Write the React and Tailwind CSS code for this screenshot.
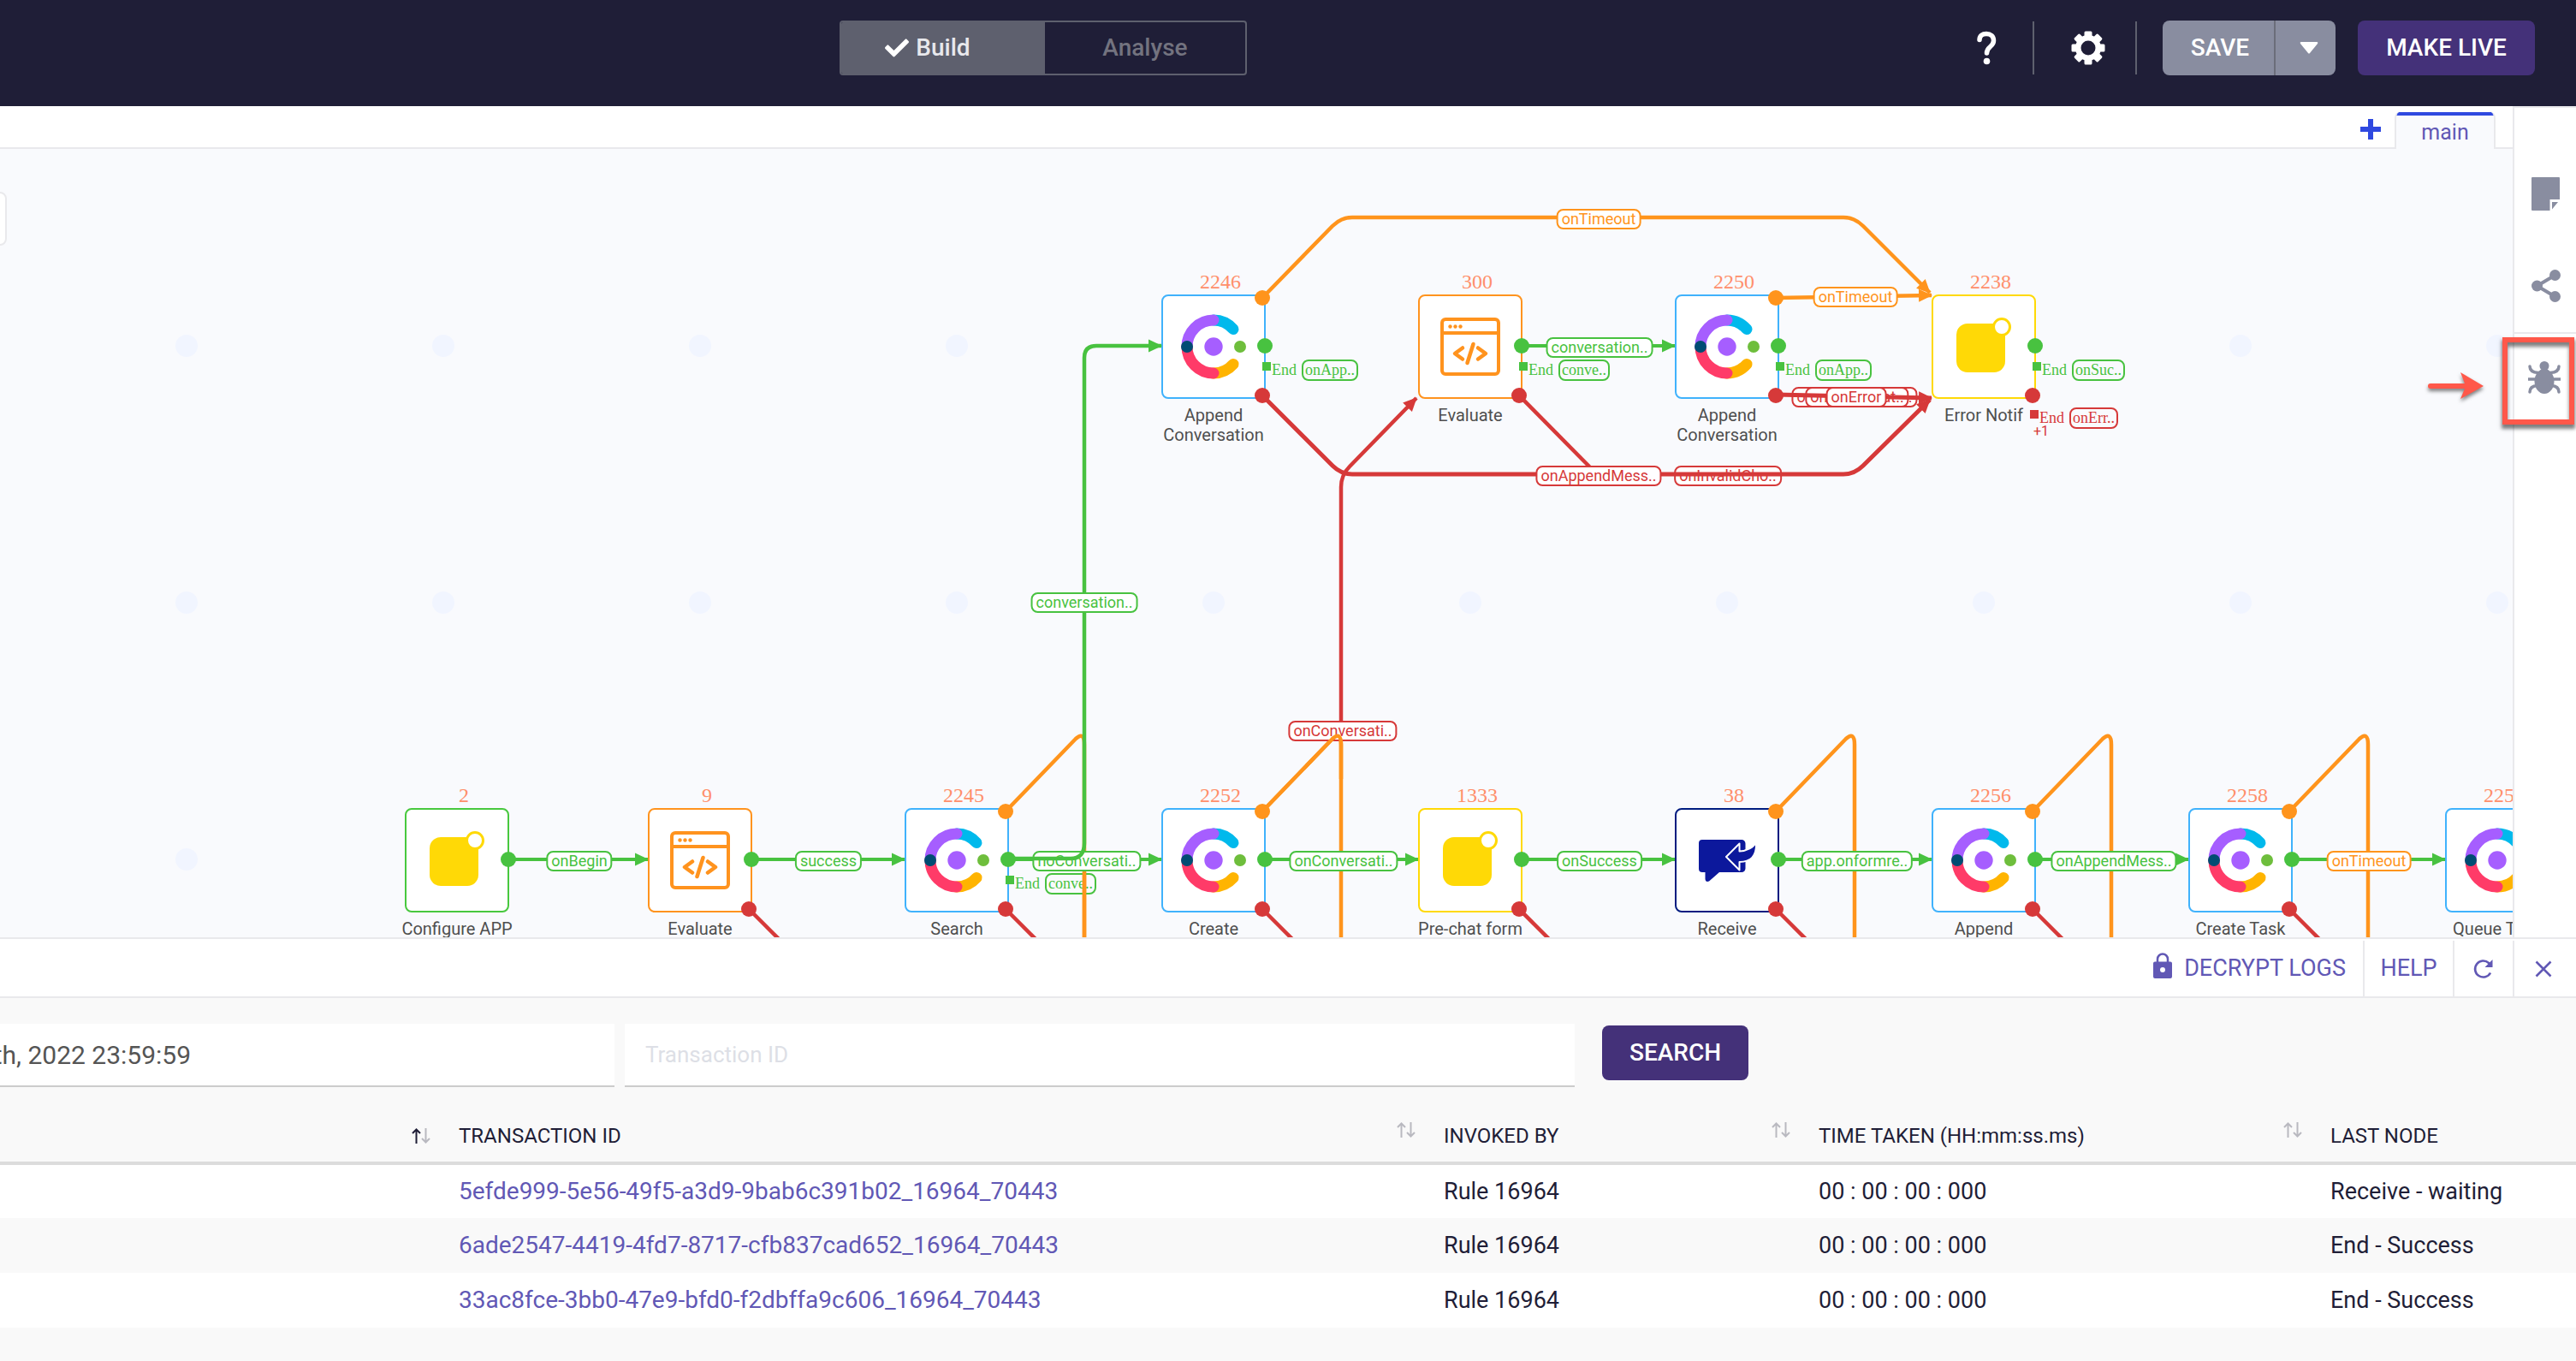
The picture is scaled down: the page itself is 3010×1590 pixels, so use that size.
import { FaCheck } from "react-icons/fa";

const GREEN = "#48c240";
const ORANGE = "#ff941c";
const RED = "#d63939";

const frames = {
  blue: "border-[#40b2fc]",
  orange: "border-[#ff931e]",
  yellow: "border-[#ffd906]",
  green: "border-[#48c83e]",
  navy: "border-[#001c80]",
};

const ROW_A = 230;
const ROW_B = 830;

const nodes = [
  { x: 1418, y: ROW_A, id: "2246", name: "Append Conversation", kind: "chat", frame: "blue", ports: "tsf" },
  { x: 1718, y: ROW_A, id: "300", name: "Evaluate", kind: "code", frame: "orange", ports: "sf" },
  { x: 2018, y: ROW_A, id: "2250", name: "Append Conversation", kind: "chat", frame: "blue", ports: "tsf" },
  { x: 2318, y: ROW_A, id: "2238", name: "Error Notif", kind: "notify", frame: "yellow", ports: "sf" },
  { x: 534, y: ROW_B, id: "2", name: "Configure APP", kind: "notify", frame: "green", ports: "s" },
  { x: 818, y: ROW_B, id: "9", name: "Evaluate", kind: "code", frame: "orange", ports: "sf" },
  { x: 1118, y: ROW_B, id: "2245", name: "Search", kind: "chat", frame: "blue", ports: "tsf" },
  { x: 1418, y: ROW_B, id: "2252", name: "Create", kind: "chat", frame: "blue", ports: "tsf" },
  { x: 1718, y: ROW_B, id: "1333", name: "Pre-chat form", kind: "notify", frame: "yellow", ports: "sf" },
  { x: 2018, y: ROW_B, id: "38", name: "Receive", kind: "receive", frame: "navy", ports: "tsf" },
  { x: 2318, y: ROW_B, id: "2256", name: "Append", kind: "chat", frame: "blue", ports: "tsf" },
  { x: 2618, y: ROW_B, id: "2258", name: "Create Task", kind: "chat", frame: "blue", ports: "tsf" },
  { x: 2918, y: ROW_B, id: "2259", name: "Queue Task", kind: "chat", frame: "blue", ports: "tsf" },
];

const tags = [
  { x: 1868, y: 82, text: "onTimeout", tone: "orange" },
  { x: 2168, y: 173, text: "onTimeout", tone: "orange" },
  { x: 1869, y: 232, text: "conversation..", tone: "green" },
  { x: 1868, y: 382, text: "onAppendMess..", tone: "red", top: true },
  { x: 2019, y: 382, text: "onInvalidCho..", tone: "red" },
  { x: 2167, y: 290, text: "onAppendMess..", tone: "red" },
  { x: 2170, y: 290, text: "onInvalidDat..", tone: "red" },
  { x: 2169, y: 290, text: "onError", tone: "red", top: true },
  { x: 1267, y: 530, text: "conversation..", tone: "green", top: true },
  { x: 1569, y: 680, text: "onConversati..", tone: "red" },
  { x: 677, y: 832, text: "onBegin", tone: "green" },
  { x: 968, y: 832, text: "success", tone: "green" },
  { x: 1270, y: 832, text: "noConversati..", tone: "green" },
  { x: 1570, y: 832, text: "onConversati..", tone: "green" },
  { x: 1869, y: 832, text: "onSuccess", tone: "green" },
  { x: 2170, y: 832, text: "app.onformre..", tone: "green" },
  { x: 2470, y: 832, text: "onAppendMess..", tone: "green" },
  { x: 2768, y: 832, text: "onTimeout", tone: "orange" },
];

const ends = [
  { x: 1475, y: 246, text: "onApp..", tone: "green" },
  { x: 1775, y: 246, text: "conve..", tone: "green" },
  { x: 2075, y: 246, text: "onApp..", tone: "green" },
  { x: 2375, y: 246, text: "onSuc..", tone: "green" },
  { x: 2372, y: 302, text: "onErr..", tone: "red", extra: "+1" },
  { x: 1175, y: 846, text: "conve..", tone: "green" },
];

const tones = {
  green: "border-[#48c240] text-[#48c240]",
  orange: "border-[#ff941c] text-[#ff941c]",
  red: "border-[#d63939] text-[#d63939]",
};
const fills = { green: "bg-[#48c240]", red: "bg-[#d63939]" };

function ChatIcon() {
  return (
    <svg width="76" height="76" viewBox="-38 -38 76 76" fill="none" strokeWidth="13" strokeLinecap="round" aria-hidden="true">
      <path d="M0 -31A31 31 0 0 1 23 -20.5" stroke="#00b9ec" />
      <path d="M0 31A31 31 0 0 0 23 20.5" stroke="#ffb400" />
      <path d="M-31 0A31 31 0 0 1 0 -31" stroke="#a65eff" />
      <path d="M-31 0A31 31 0 0 0 0 31" stroke="#ff3b68" />
      <circle cx="-31" cy="0" r="7" fill="#004c73" />
      <circle r="10.7" fill="#a65eff" />
      <circle cx="31" cy="0" r="7" fill="#6ebe3c" />
    </svg>
  );
}

function CodeIcon() {
  return (
    <svg width="72" height="70" viewBox="0 0 72 70" fill="none" stroke="#ff931e" strokeWidth="4" strokeLinecap="round" strokeLinejoin="round" aria-hidden="true">
      <rect x="3" y="3" width="66" height="64" rx="4" />
      <path d="M3 19H69" strokeLinecap="butt" />
      <path d="M27 36.5L18 43L27 49.5M45 36.5L54 43L45 49.5M39.5 32L32.5 54" strokeWidth="4.5" />
      <g fill="#ff931e" stroke="none">
        <circle cx="12.5" cy="11.5" r="2.2" />
        <circle cx="18.5" cy="11.5" r="2.2" />
        <circle cx="24.5" cy="11.5" r="2.2" />
      </g>
    </svg>
  );
}

function NotifyIcon() {
  return (
    <svg width="76" height="76" viewBox="-38 -38 76 76" aria-hidden="true">
      <rect x="-32" y="-27" width="57" height="57" rx="13" fill="#ffd906" />
      <circle cx="21" cy="-23" r="9.5" fill="#fff" stroke="#ffd906" strokeWidth="3" />
    </svg>
  );
}

function ReceiveIcon() {
  return (
    <svg width="76" height="76" viewBox="-38 -38 76 76" aria-hidden="true">
      <path d="M-29 -24H17a4.5 4.5 0 0 1 4.5 4.5V9.5a4.5 4.5 0 0 1 -4.5 4.5H-9L-21 24.5Q-25 26 -25.5 22V14H-29a4 4 0 0 1 -4 -4V-20a4 4 0 0 1 4 -4Z" fill="#0c189c" />
      <path d="M-1 -4L14.5 -19.5V-10.5C23 -11 31 -15 34 -21C35 -4 27 2 14.5 2V11.5Z" fill="#0c189c" stroke="#fff" strokeWidth="2" strokeLinejoin="round" />
    </svg>
  );
}

const icons = { chat: ChatIcon, code: CodeIcon, notify: NotifyIcon, receive: ReceiveIcon };

function FlowNode({ node }) {
  const Icon = icons[node.kind];
  return (
    <div className="absolute w-[122px]" style={{ left: node.x - 61, top: node.y - 60 }}>
      <span className="absolute -top-[29px] left-2 w-full text-center font-['Liberation_Serif',serif] text-2xl leading-7 text-[#ff8f6b]">{node.id}</span>
      <div className={`flex h-[122px] items-center justify-center rounded-lg border-2 bg-white ${frames[node.frame]}`}>
        <Icon />
      </div>
      <p className="-mx-2 pt-2 text-center text-[20px] leading-[23px] text-[#4f4f4f]">{node.name}</p>
    </div>
  );
}

function Ports({ node: { x, y, ports } }) {
  return (
    <>
      {ports.includes("t") && <circle cx={x + 57} cy={y - 56} r="9" fill={ORANGE} />}
      <circle cx={x + 60} cy={y} r="9" fill={GREEN} />
      {ports.includes("f") && <circle cx={x + 57} cy={y + 58} r="9" fill={RED} />}
    </>
  );
}

function Layer({ children }) {
  return (
    <svg className="pointer-events-none absolute inset-0 size-full" fill="none" aria-hidden="true">
      <defs>
        {[["g", GREEN], ["o", ORANGE], ["r", RED]].map(([k, c]) => (
          <marker key={k} id={`tip-${k}`} viewBox="0 0 16 16" refX="15" refY="8" markerWidth="16" markerHeight="16" markerUnits="userSpaceOnUse" orient="auto">
            <path d="M0 0.5L16 8L0 15.5Z" fill={c} />
          </marker>
        ))}
      </defs>
      {children}
    </svg>
  );
}

function Tag({ tag }) {
  return (
    <span
      className={`absolute -translate-x-1/2 -translate-y-1/2 rounded-lg border-2 bg-white px-1 text-lg leading-5 whitespace-nowrap ${tones[tag.tone]}`}
      style={{ left: tag.x, top: tag.y }}
    >
      {tag.text}
    </span>
  );
}

function EndMark({ end }) {
  return (
    <div className={`absolute font-['Liberation_Serif',serif] text-lg leading-[21px] ${tones[end.tone]}`} style={{ left: end.x, top: end.y }}>
      <div className="flex items-start">
        <span className={`mt-[3px] size-[10px] ${fills[end.tone]}`} />
        <span className="mt-0.5 ml-px">End</span>
        <span className={`ml-1.5 rounded-lg border-2 px-0.5 whitespace-nowrap ${tones[end.tone]}`}>{end.text}</span>
      </div>
      {end.extra && <span className="block pl-1 font-['Roboto',sans-serif] text-base leading-[6px]">{end.extra}</span>}
    </div>
  );
}

function Canvas() {
  const dots = [];
  for (let y = ROW_A; y < 900; y += 300) for (let x = 218; x < 3000; x += 300) dots.push([x, y]);
  const hops = [[594, 758], [878, 1058], [1178, 1358], [1478, 1658], [1778, 1958], [2078, 2258], [2378, 2558], [2678, 2858]];
  return (
    <main className="relative flex-1 overflow-hidden bg-[#f9fafd]">
      <Layer>
        {dots.map(([x, y]) => <circle key={`${x}-${y}`} cx={x} cy={y} r="13" fill="#f1f5ff" />)}
        <g stroke={ORANGE} strokeWidth="4.5">
          <path d="M1475 174L1557 90Q1567 80 1580 80H2154Q2167 80 2177 90L2255 168" markerEnd="url(#tip-o)" />
          <path d="M2075 174L2257 171" markerEnd="url(#tip-o)" />
          {[1175, 1475, 2075, 2375, 2675].map((x) => (
            <path key={x} d={`M${x} 774l82 -85q10 -9 10 7v300`} />
          ))}
        </g>
        <g stroke={RED} strokeWidth="4.5">
          <path d="M1775 288L1861 375" />
          <path d="M1567 680V395Q1567 381 1577 371L1655 291" markerEnd="url(#tip-r)" />
          {[875, 1175, 1475, 1775, 2075, 2375, 2675].map((x) => (
            <path key={x} d={`M${x} 888l60 60`} />
          ))}
        </g>
        <g stroke={GREEN} strokeWidth="4">
          <path d="M1778 230H1957" markerEnd="url(#tip-g)" />
          {hops.map(([a, b]) => <path key={a} d={`M${a} 830H${b - 1}`} markerEnd="url(#tip-g)" />)}
        </g>
      </Layer>
      <div className="absolute top-[50px] -left-2 h-[63px] w-4 rounded-lg border-2 border-[#e9e9ec] bg-white" />
      {nodes.map((n) => <FlowNode key={n.id} node={n} />)}
      {tags.filter((t) => !t.top).map((t, i) => <Tag key={i} tag={t} />)}
      {ends.map((e, i) => <EndMark key={i} end={e} />)}
      <Layer>
        <g stroke={RED} strokeWidth="5">
          <path d="M1475 288L1557 370Q1567 380 1580 380H2154Q2167 380 2177 370L2255 293" markerEnd="url(#tip-r)" />
          <path d="M2075 287L2257 291" markerEnd="url(#tip-r)" />
        </g>
        <g stroke={ORANGE} strokeWidth="4.5">
          <path d="M1475 774l82 -85q10 -9 10 7v40" />
          <path d="M1267 845V1200" />
        </g>
        <path d="M1178 829H1251Q1267 829 1267 811V244Q1267 230 1281 230H1357" stroke={GREEN} strokeWidth="4.5" markerEnd="url(#tip-g)" />
        {nodes.map((n) => <Ports key={n.id} node={n} />)}
      </Layer>
      {tags.filter((t) => t.top).map((t, i) => <Tag key={i} tag={t} />)}
    </main>
  );
}

function Header() {
  return (
    <header className="flex h-[124px] shrink-0 items-center justify-between bg-[#1f1e37] pr-12 pb-3 pl-[981px] text-[28px] font-medium">
      <div className="flex h-16 w-[476px] overflow-hidden rounded border-2 border-[#5e606e]">
        <button className="flex w-[238px] items-center justify-center gap-2 bg-[#5e606e] pr-9 text-[#e8e8ec]">
          <FaCheck className="size-7 text-white" />
          Build
        </button>
        <button className="flex-1 text-[#73737f]">Analyse</button>
      </div>
      <div className="flex items-center text-white">
        <button aria-label="Help" className="flex w-[66px] items-center">
          <svg width="24" height="40" viewBox="0 0 24 40" fill="none" aria-hidden="true">
            <path d="M4 10.5C4 5.5 7.500 3.5 12 3.5C17 3.5 20.5 6.5 20.5 11.5C20.5 19 12.5 18 12.5 26" stroke="#fff" strokeWidth="5.5" strokeLinecap="round" />
            <circle cx="12.5" cy="35.5" r="3.8" fill="#fff" />
          </svg>
        </button>
        <span className="h-[62px] w-0.5 bg-[#5e606e]" />
        <button aria-label="Settings" className="flex w-[118px] items-center justify-center pl-2">
          <svg width="40" height="40" viewBox="-20 -20 40 40" fill="#fff" aria-hidden="true">
            <mask id="gear-hole"><rect x="-20" y="-20" width="40" height="40" fill="#fff" /><circle r="8.5" fill="#000" /></mask>
            <g mask="url(#gear-hole)">
              <circle r="15" />
              {[0, 45, 90, 135].map((a) => <rect key={a} x="-4.5" y="-19.5" width="9" height="39" rx="1.5" transform={`rotate(${a})`} />)}
            </g>
          </svg>
        </button>
        <span className="h-[62px] w-0.5 bg-[#5e606e]" />
        <div className="ml-[30px] flex h-16 overflow-hidden rounded-lg bg-[#898da0]">
          <button className="w-[132px] border-r-2 border-[#6b6d7a] pl-1">SAVE</button>
          <button aria-label="Save options" className="flex w-[70px] items-center justify-center pl-2">
            <svg width="22" height="14" viewBox="0 0 22 14" fill="#fff" aria-hidden="true"><path d="M1.5 0H20.5Q22 0.5 21 2L12 13Q11 14 10 13L1 2Q0 0.5 1.5 0Z" /></svg>
          </button>
        </div>
        <button className="ml-[26px] h-16 w-[207px] rounded-lg bg-[#443179]">MAKE LIVE</button>
      </div>
    </header>
  );
}

function Sidebar() {
  return (
    <aside className="relative flex w-[74px] shrink-0 flex-col border-t-2 border-l-2 border-[#e9e9ec] bg-white text-[#898da0]">
      <button aria-label="Notes" className="mt-[81px] ml-5 h-10">
        <svg width="33" height="40" viewBox="0 0 33 40" fill="currentColor" aria-hidden="true">
          <path d="M1 0H32Q33 0 33 1V26H21.5V39H1Q0 39 0 38V1Q0 0 1 0Z" />
          <path d="M24 29H31L24 37.5Z" />
        </svg>
      </button>
      <button aria-label="Share" className="mt-[68px] ml-5 flex">
        <svg width="34" height="38" viewBox="0 0 34 38" fill="currentColor" aria-hidden="true">
          <path d="M27.5 6.5L6.5 19L27.5 31.5" fill="none" stroke="currentColor" strokeWidth="4" />
          <circle cx="6.5" cy="19" r="6.5" /><circle cx="27.5" cy="6.5" r="6.5" /><circle cx="27.5" cy="31.5" r="6.5" />
        </svg>
      </button>
      <div className="mt-[35px] h-0.5 bg-[#e9e9ec]" />
      <button aria-label="Debug" className="mt-8 ml-4 flex">
        <svg width="38" height="38" viewBox="0 0 38 38" fill="currentColor" aria-hidden="true">
          <circle cx="19" cy="5.5" r="5.5" />
          <ellipse cx="19" cy="23.5" rx="11.5" ry="14.5" />
          <path d="M2 6Q2 13 12 13.5M36 6Q36 13 26 13.5M0.5 21H10M37.5 21H28M2 36Q2 29 11 28.5M36 36Q36 29 27 28.5" fill="none" stroke="currentColor" strokeWidth="3.5" strokeLinecap="round" />
        </svg>
      </button>
      <svg className="absolute top-[307px] right-[106px] drop-shadow-[0_3px_2px_rgba(0,0,0,0.5)]" width="70" height="36" viewBox="0 0 70 36" fill="#ff584a" aria-hidden="true">
        <path d="M6 15H46L41 2L68 18L41 33L46 21H6a3 3 0 0 1 0 -6Z" />
      </svg>
      <div className="absolute top-[268px] right-0.5 h-[102px] w-[84px] border-[6px] border-[#ff584a] shadow-[0_4px_4px_1px_rgba(0,0,0,0.5),inset_0_5px_4px_rgba(0,0,0,0.5)]" />
    </aside>
  );
}

function SortIcon({ up }) {
  return (
    <svg width="22" height="18" viewBox="0 0 22 18" fill="none" strokeWidth="2" className="float-right mr-px" aria-hidden="true">
      <path d="M5.5 18V1.5M1 6L5.5 1.5L10 6" stroke={up ? "#1f1e37" : "#b9b9c0"} />
      <path d="M16.5 0V16.5M12 12L16.5 16.5L21 12" stroke="#b9b9c0" />
    </svg>
  );
}

const rows = [
  ["5efde999-5e56-49f5-a3d9-9bab6c391b02_16964_70443", "Receive - waiting"],
  ["6ade2547-4419-4fd7-8717-cfb837cad652_16964_70443", "End - Success"],
  ["33ac8fce-3bb0-47e9-bfd0-f2dbffa9c606_16964_70443", "End - Success"],
];

function Logs() {
  return (
    <section className="shrink-0 border-t-2 border-[#e9e9ec] bg-[#f9f9f9] pb-[39px]">
      <div className="flex h-[69px] justify-end border-b-2 border-[#e9e9ec] bg-white pt-0.5 text-[27px] text-[#6158b5]">
        <button className="flex items-center gap-[14px] pr-5">
          <svg width="22" height="30" viewBox="0 0 22 30" className="-mt-2" fill="currentColor" aria-hidden="true">
            <path fillRule="evenodd" d="M2 10.5H20a2 2 0 0 1 2 2V28a2 2 0 0 1 -2 2H2a2 2 0 0 1 -2 -2V12.5a2 2 0 0 1 2 -2ZM11 17a3 3 0 1 0 0 6a3 3 0 0 0 0 -6Z" />
            <path d="M5 11V7.5a6 6 0 0 1 12 0V11" fill="none" stroke="currentColor" strokeWidth="2.5" />
          </svg>
          DECRYPT LOGS
        </button>
        <button className="w-[105px] border-l-2 border-[#e9e9ec]">HELP</button>
        <button aria-label="Refresh" className="flex w-[70px] items-center justify-center border-l-2 border-[#e9e9ec]">
          <svg width="24" height="24" viewBox="0 0 24 24" fill="none" stroke="currentColor" strokeWidth="2.6" aria-hidden="true">
            <path d="M20 16.5A9.5 9.5 0 1 1 18 5L21 8" />
            <path d="M22.5 1V10H13.5Z" fill="currentColor" stroke="none" />
          </svg>
        </button>
        <button aria-label="Close" className="flex w-[74px] items-center justify-center border-l-2 border-[#e9e9ec] pr-1">
          <svg width="20" height="20" viewBox="0 0 20 20" fill="none" stroke="currentColor" strokeWidth="2.5" aria-hidden="true"><path d="M1.5 1.5L18.5 18.5M18.5 1.5L1.5 18.5" /></svg>
        </button>
      </div>
      <form className="flex items-start pt-[30px]" onSubmit={(e) => e.preventDefault()}>
        <div className="flex w-[718px] justify-end overflow-hidden">
          <input
            aria-label="End date"
            readOnly
            defaultValue="July 28th, 2022 23:59:59"
            className="h-[74px] w-[900px] shrink-0 border-b-2 border-[#ccc] bg-white pr-[495px] text-right text-[30px] text-[#555] outline-none"
          />
        </div>
        <input
          aria-label="Transaction ID"
          placeholder="Transaction ID"
          className="ml-3 h-[74px] w-[1110px] border-b-2 border-[#ccc] bg-white px-6 text-[26px] outline-none placeholder:text-[#dddfe6]"
        />
        <button className="mt-0.5 ml-8 h-16 w-[171px] rounded-lg bg-[#443179] text-[28px] font-medium text-white">SEARCH</button>
      </form>
      <table className="mt-5 w-full table-fixed text-left text-[#1f1e37]">
        <colgroup>
          <col className="w-[520px]" />
          <col className="w-[1151px]" />
          <col className="w-[438px]" />
          <col className="w-[598px]" />
          <col />
        </colgroup>
        <thead>
          <tr className="h-[69px] border-b-4 border-[#dcdcdc] text-2xl">
            {["", "TRANSACTION ID", "INVOKED BY", "TIME TAKEN (HH:mm:ss.ms)", "LAST NODE"].map((h, i) => (
              <th key={i} className="px-4 pt-1.5 font-normal">
                {i < 4 && <SortIcon up={i === 0} />}
                {h}
              </th>
            ))}
          </tr>
        </thead>
        <tbody>
          {rows.map(([id, last]) => (
            <tr key={id} className="h-16 text-[27px] odd:bg-white">
              <td />
              <td className="px-4 text-[28px]"><a href="#" className="text-[#6158b5]">{id}</a></td>
              <td className="px-4">Rule 16964</td>
              <td className="px-4">00 : 00 : 00 : 000</td>
              <td className="px-4">{last}</td>
            </tr>
          ))}
        </tbody>
      </table>
    </section>
  );
}

export default function App() {
  return (
    <div className="flex h-screen flex-col overflow-hidden bg-white font-['Roboto',sans-serif]">
      <Header />
      <div className="flex min-h-0 flex-1">
        <div className="flex min-w-0 flex-1 flex-col">
          <div className="flex h-[50px] items-end justify-end border-b-2 border-[#e9e9ec] pr-5">
            <button aria-label="Add tab" className="mr-4 mb-[9px] text-[#2f49e0]">
              <svg width="24" height="24" viewBox="0 0 24 24" fill="currentColor" aria-hidden="true"><path d="M9 0H15V9H24V15H15V24H9V15H0V9H9Z" /></svg>
            </button>
            <button className="-mb-0.5 h-11 w-[118px] overflow-hidden rounded-t-lg border-x-2 border-[#e9e9ec] bg-[#f9fafd] text-[25px] leading-[39px] text-[#6158b5]">
              <span className="block border-t-4 border-[#2f49e0]">main</span>
            </button>
          </div>
          <Canvas />
        </div>
        <Sidebar />
      </div>
      <Logs />
    </div>
  );
}
